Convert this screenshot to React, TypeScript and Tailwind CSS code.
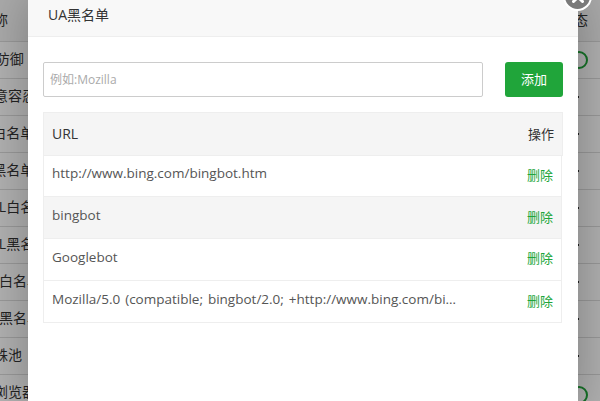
const FONT = "font-['Open_Sans','Noto_Sans_CJK_SC',sans-serif]";

const bgRows: { name: string; cell: "ring" | "ringLow" | "dot"; offset: string }[] = [
  { name: "CC防御", cell: "ring", offset: "-ml-[22px]" },
  { name: "恶意容忍", cell: "dot", offset: "-ml-[20px]" },
  { name: "IP白名单", cell: "dot", offset: "-ml-[20px]" },
  { name: "IP黑名单", cell: "dot", offset: "-ml-[20px]" },
  { name: "URL白名单", cell: "dot", offset: "-ml-[20px]" },
  { name: "URL黑名单", cell: "dot", offset: "-ml-[20px]" },
  { name: "UA白名单", cell: "dot", offset: "-ml-[20px]" },
  { name: "UA黑名单", cell: "dot", offset: "-ml-[20px]" },
  { name: "蜘蛛池", cell: "dot", offset: "-ml-[20px]" },
  { name: "非浏览器", cell: "ringLow", offset: "-ml-[20px]" },
];

const uaRows = [
  { text: "http://www.bing.com/bingbot.htm", h: "h-[41px]", bg: "bg-white", pb: "pb-[5px]", pd: "pb-0" },
  { text: "bingbot", h: "h-[42px]", bg: "bg-[#f5f5f5]", pb: "pb-[4px]", pd: "pb-0" },
  { text: "Googlebot", h: "h-[42px]", bg: "bg-white", pb: "pb-[4px]", pd: "pb-[2px]" },
  {
    text: "Mozilla/5.0 (compatible; bingbot/2.0; +http://www.bing.com/bingbot.htm)",
    h: "h-[42px]",
    bg: "bg-white",
    pb: "pb-[4px]",
    pd: "pb-0",
  },
];

export default function App() {
  return (
    <div className={`relative h-[401px] w-[600px] overflow-hidden bg-white text-[14px] text-[#333] ${FONT}`}>
      <div className="flex h-[42px] items-center justify-between border-b border-[#ddd] bg-[#f5f5f5] pb-[2px]">
        <span className="-ml-[20px]">名称</span>
        <span className="mr-[12px]">状态</span>
      </div>
      {bgRows.map((r) => (
        <div key={r.name} className="flex h-[37px] items-center justify-between border-b border-[#ddd]">
          <span className={`whitespace-nowrap pb-[4px] ${r.offset}`}>{r.name}</span>
          <span className="mr-[12px] flex w-[18px] justify-start">
            {r.cell === "dot" ? (
              <span className="ml-[8px] h-[2px] w-[1px] bg-[#333]" />
            ) : (
              <span
                className={`h-[18px] w-[18px] rounded-full border-2 border-[#20a53a] ${r.cell === "ringLow" ? "mt-[4px]" : ""}`}
              />
            )}
          </span>
        </div>
      ))}

      <div className="absolute inset-0 bg-black/30" />

      <div className="absolute -top-[6px] left-[28px] h-[420px] w-[550px] bg-white shadow-[1px_1px_50px_rgba(0,0,0,0.3)]">
        <div className="flex h-[43px] items-center border-b border-[#eee] bg-[#f8f8f8] pb-[1px] pl-[20px]">UA黑名单</div>
        <div className="px-[15px] pt-[25px]">
          <div className="flex gap-[22px]">
            <input
              readOnly
              placeholder="例如:Mozilla"
              className="h-[35px] w-[440px] rounded-[2px] border border-[#ccc] px-[6px] text-[12px] outline-none placeholder:text-[#aaa]"
            />
            <button className="h-[35px] w-[58px] rounded-[3px] bg-[#20a53a] text-[13px] text-white">添加</button>
          </div>
          <div className="mt-[15px]">
            <div className="flex h-[44px] items-center justify-between border border-[#eee] bg-[#f5f5f5] pb-[2px] pl-[8px] pr-[8px]">
              <span>URL</span>
              <span className="pt-[3px] text-[13px]">操作</span>
            </div>
            <div className="mr-[1px] border-x border-[#eee]">
              {uaRows.map((r) => (
                <div key={r.text} className={`flex items-center justify-between border-b border-[#eee] pl-[8px] pr-[8px] ${r.h} ${r.bg}`}>
                  <span className={`w-[405px] truncate text-[13.5px] text-[#555] [word-spacing:1.4px] ${r.pb}`}>{r.text}</span>
                  <button className={`text-[13px] text-[#20a53a] ${r.pd}`}>删除</button>
                </div>
              ))}
            </div>
          </div>
        </div>
      </div>

      <div className="absolute -top-[18px] left-[563px] flex h-[29px] w-[29px] items-center justify-center rounded-full border-[2.5px] border-white bg-[#7a7a7a]">
        <svg width="12" height="12" viewBox="0 0 12 12" className="text-white">
          <path d="M1.5 1.5l9 9M10.5 1.5l-9 9" stroke="currentColor" strokeWidth="3" strokeLinecap="round" />
        </svg>
      </div>
    </div>
  );
}
